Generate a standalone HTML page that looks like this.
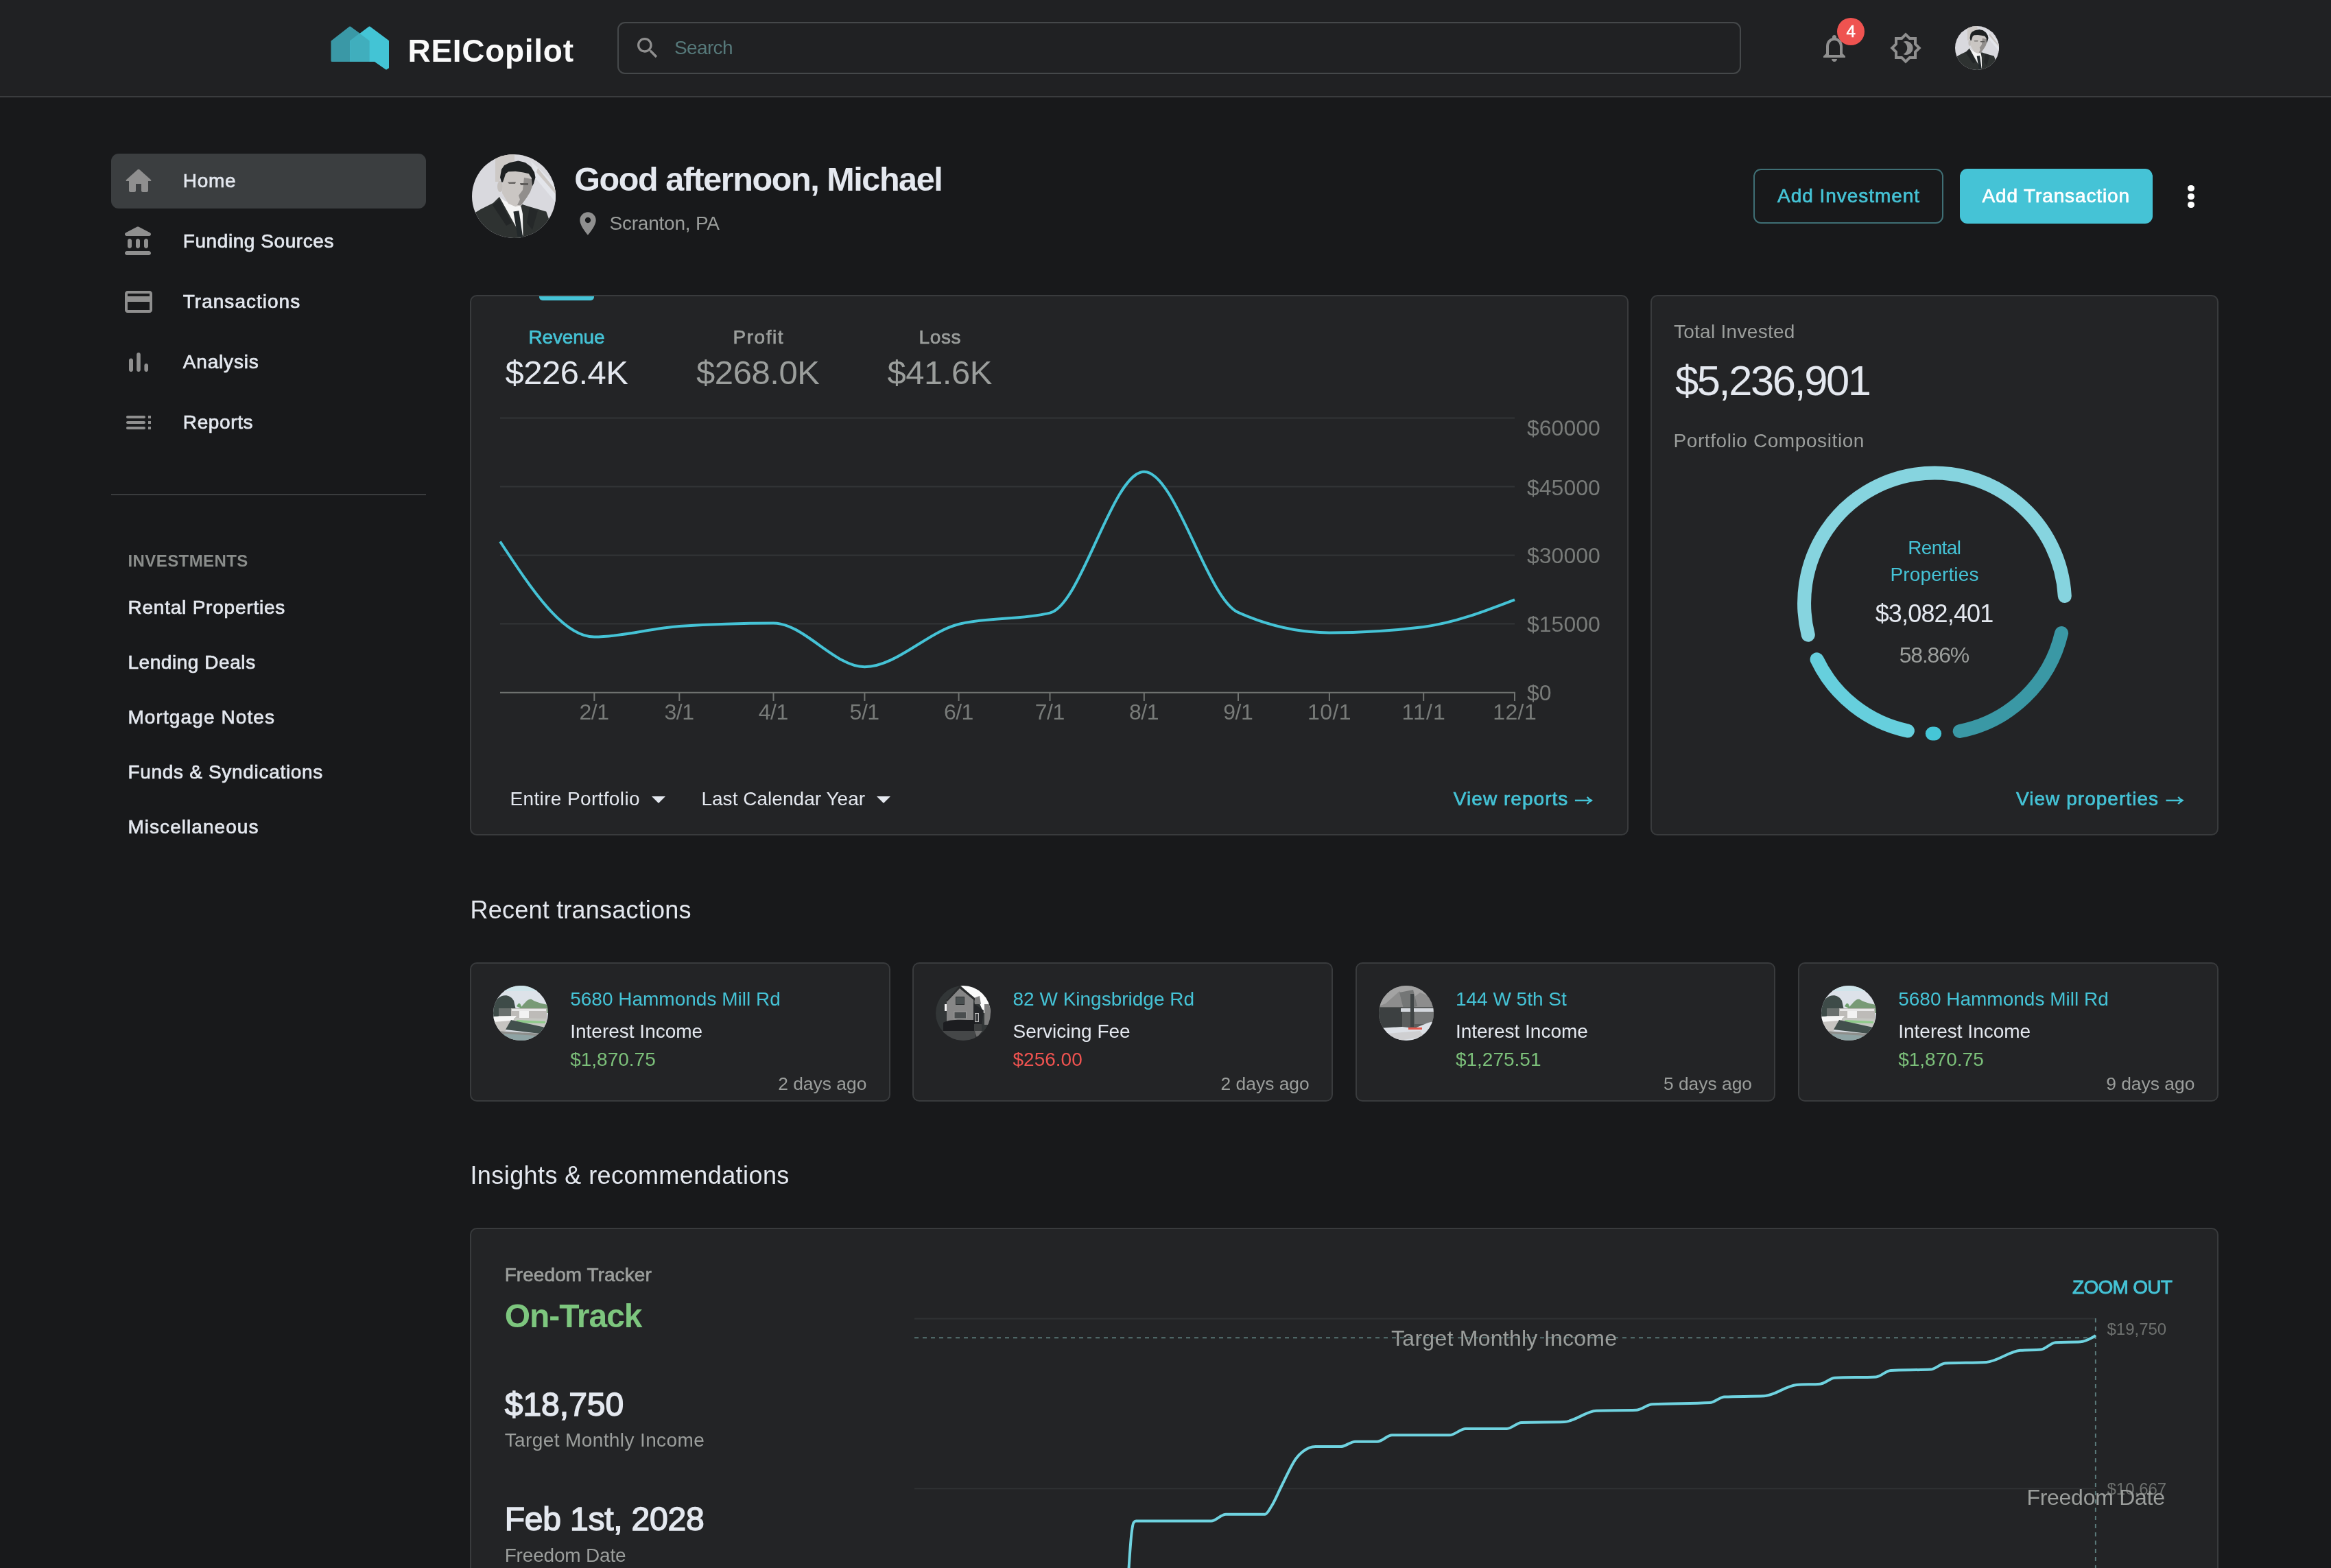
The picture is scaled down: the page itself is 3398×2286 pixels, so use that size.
<!DOCTYPE html>
<html><head><meta charset="utf-8"><title>REICopilot</title>
<style>
html,body{margin:0;padding:0;}
body{width:3398px;height:2286px;overflow:hidden;background:#18191b;font-family:"Liberation Sans",sans-serif;position:relative;}
.t{position:absolute;white-space:nowrap;line-height:1;}
.abs{position:absolute;}
.card{position:absolute;box-sizing:border-box;background:#232426;border:2px solid #393b3d;border-radius:10px;}
svg{position:absolute;overflow:visible;}
</style></head><body>
<div id="root" style="position:absolute;left:0;top:0;width:3398px;height:2286px;will-change:transform;">
<svg width="0" height="0" style="position:absolute">
<defs>
<symbol id="man" viewBox="0 0 122 122">
<clipPath id="mc"><circle cx="61" cy="61" r="61"/></clipPath>
<g clip-path="url(#mc)">
<rect width="122" height="122" fill="#d9d9de"/>
<path d="M34,0 L62,0 L62,14 L44,20 L40,40 L34,40 Z" fill="#cdc9c6"/>
<path d="M86,10 L122,44 L122,70 L92,34 Z" fill="#e3e5ea"/>
<path d="M96,20 L122,52 L122,58 L94,26 Z" fill="#cbc7c4"/>
<path d="M3,86 L12.400,80.300 L30.800,71.100 L40,62 L62,84 L73.600,73 L83.800,76.200 L108.300,83.400 L112,94 L122,122 L0,122 Z" fill="#2e3231"/>
<path d="M30,74 L40,66 L58,100 L50,104 Z" fill="#232627"/>
<path d="M84,78 L96,82 L88,110 L80,100 Z" fill="#252829"/>
<path d="M40,62 L48,68 L71.600,76 L74,87 L74.500,119 L66.500,110 Z" fill="#f5f5f5"/>
<path d="M60.400,83.400 L68.500,82.300 L74,120 L66.500,120 Z" fill="#23292b"/>
<ellipse cx="41" cy="47" rx="4" ry="8" fill="#c4c0bd"/>
<path d="M45,30 L52,24 L74,24 L84,28 L88,40 L87.900,46.600 L84.900,54.800 L79.800,63 L71.600,74.200 L63.400,76.200 L53.200,72.100 L44,56.800 Z" fill="#cac6c3"/>
<path d="M76,34 L87,36 L87.900,46.600 L84.900,54.800 L79.800,63 L71.600,74.200 L66,74 L70,66 L68,60 L74,52 Z" fill="#918e8c"/>
<path d="M52,40.500 L64,40 L63,43 L54,43 Z" fill="#6f6c6a"/>
<path d="M70,42 L82,42 L82,45 L71,45 Z" fill="#5f5d5b"/>
<path d="M43,40.500 L41,33.400 L43,22.100 L47.100,16 L55.300,11.900 L67.500,9.400 L77.700,11.900 L85.900,18 L91,26.200 L92.500,33.400 L90,42.500 L87.900,46.600 L86.900,34.400 L82.800,28.300 L73.600,26.200 L63.400,24.700 L53.200,25.200 L49.100,28.300 L47.100,34.400 L45,40.500 Z" fill="#1e2122"/>
</g>
</symbol>
<symbol id="h1" viewBox="0 0 80 80">
<clipPath id="c1"><circle cx="40" cy="40" r="40"/></clipPath>
<g clip-path="url(#c1)">
<rect width="80" height="80" fill="#dde2e9"/>
<rect width="80" height="8" fill="#cfe5eb"/>
<path d="M0,30 C4,14 22,8 30,22 L34,40 L0,46 Z" fill="#3e4b48"/>
<path d="M38,34 C46,26 50,18 56,20 C62,24 70,26 80,28 L80,40 L38,40 Z" fill="#789a76"/>
<path d="M34,30 C38,22 40,26 42,34 Z" fill="#6fa06e"/>
<rect x="8" y="33" width="70" height="18" fill="#bdbbb8"/>
<rect x="27" y="34" width="50" height="3" fill="#e8e8e8"/>
<rect x="38" y="37" width="14" height="10" fill="#f2f2f2"/>
<rect x="8" y="33" width="18" height="11" fill="#6a706e"/>
<path d="M0,45 L34,44 L28,52 L0,54 Z" fill="#f6f6f6"/>
<path d="M0,53 L26,51 L18,66 L4,68 Z" fill="#c6c4c1"/>
<path d="M30,47 L78,48 L78,62 L34,56 Z" fill="#c5c7c2"/>
<path d="M34,50 L76,52 L76,55 L34,54 Z" fill="#8fca8a"/>
<path d="M26,50 L76,61 L68,70 L18,64 Z" fill="#42504d"/>
<path d="M6,66 L70,70 L60,80 L14,80 Z" fill="#8e8f8c"/>
<path d="M14,70 L64,73 L58,80 L20,80 Z" fill="#8ea3a4"/>
</g>
</symbol>
<symbol id="h2" viewBox="0 0 80 80">
<clipPath id="c2"><circle cx="40" cy="40" r="40"/></clipPath>
<g clip-path="url(#c2)">
<rect width="80" height="80" fill="#323637"/>
<path d="M36,0 L80,0 L80,40 L70,40 L64,26 L55,17 Z" fill="#fbfbfb"/>
<path d="M56,18 L64,15 L66,27 L57,27 Z" fill="#7f7f7f"/>
<rect x="71" y="27" width="9" height="30" fill="#7e7e7e"/>
<path d="M16,52 L16,20 L35,2 L55,18 L55,52 Z" fill="#868686"/>
<path d="M15,21 L35,0 L57,18 L57,22 L35,4 L17,23 Z" fill="#2a2c2d"/>
<rect x="13" y="27" width="3" height="10" fill="#f4f4f4"/>
<rect x="29.500" y="16.500" width="12" height="11" fill="#4a5051" stroke="#2d3031" stroke-width="1"/>
<rect x="27" y="38" width="17.500" height="10" fill="#4a4e4f" stroke="#9a9a9a" stroke-width="1"/>
<path d="M55,26 L70,36 L67,60 L55,60 Z" fill="#25272a"/>
<rect x="57.500" y="40.500" width="5" height="12" fill="#3a3c3e" stroke="#bdbdbd" stroke-width="1"/>
<path d="M11,54 C20,48 40,50 57,50 L57,66 L11,66 Z" fill="#1c1d20"/>
<rect x="56" y="56" width="11" height="10" fill="#3c3e3f"/>
<path d="M8,66 L58,66 L58,80 L16,80 Z" fill="#454748"/>
<path d="M57,66 L68,66 L60,76 Z" fill="#6f6f6f"/>
</g>
</symbol>
<symbol id="h3" viewBox="0 0 80 80">
<clipPath id="c3"><circle cx="40" cy="40" r="40"/></clipPath>
<g clip-path="url(#c3)">
<rect width="80" height="80" fill="#8d8d8d"/>
<path d="M0,0 L80,0 L80,18 L60,10 L44,22 L30,8 L10,26 L0,30Z" fill="#a3a3a3"/>
<path d="M30,10 L50,6 L56,30 L36,34 Z" fill="#747676"/>
<rect x="0" y="31" width="80" height="30" fill="#5a5d5d"/>
<rect x="0" y="32" width="34" height="30" fill="#3c4041"/>
<rect x="32" y="33" width="48" height="5" fill="#d4d8de"/>
<rect x="52" y="38" width="28" height="18" fill="#777979"/>
<rect x="46" y="12" width="5" height="48" fill="#3f4445"/>
<path d="M0,62 L34,60 L52,62 L72,54 L80,52 L80,80 L0,80 Z" fill="#dde1e7"/>
<path d="M10,70 L60,66 L66,74 L30,80 L14,80 Z" fill="#cfcfd1"/>
<rect x="43" y="61" width="20" height="3" fill="#e2574c"/>
</g>
</symbol>
</defs></svg>
<div class="abs" style="left:0;top:0;width:3398px;height:140px;background:#202123;border-bottom:2px solid #3a3c3e;"></div>
<svg style="left:480px;top:36px" width="90" height="70" viewBox="480 36 90 70">
<path d="M484,60.500 L510.200,40 L537.500,60 L537.500,88.500 L484,88.500 Z" fill="#3a98a6" stroke="#3a98a6" stroke-width="3" stroke-linejoin="round"/>
<path d="M538.600,40 L511.500,60.500 L511.500,88.500 L546.500,88.500 L563,100 L565.500,98.500 L565.500,60 Z" fill="#43c4d5" stroke="#43c4d5" stroke-width="3" stroke-linejoin="round"/>
<path d="M510.200,59.500 L524.400,48.800 L538.600,59.500 L538.600,90 L510.200,90 Z" fill="#40aebd"/>
</svg>
<div class="t" style="left:594.5px;top:51.1px;font-size:46px;color:#fafafa;letter-spacing:0.71px;font-weight:700;">REICopilot</div>
<div class="abs" style="left:900px;top:32px;width:1638px;height:76px;box-sizing:border-box;border:2px solid #45484a;border-radius:11px;"></div>
<svg style="left:924px;top:50px" width="40" height="40" viewBox="0 0 24 24"><path fill="#8f8f8f" d="M15.5 14h-.79l-.28-.27C15.41 12.59 16 11.11 16 9.5 16 5.91 13.09 3 9.5 3S3 5.91 3 9.5 5.91 16 9.5 16c1.61 0 3.09-.59 4.230-1.570l.27.28v.79l5 4.990L20.490 19l-4.990-5zm-6 0C7.010 14 5 11.990 5 9.500S7.010 5 9.500 5 14 7.010 14 9.500 11.990 14 9.500 14z"/></svg>
<div class="t" style="left:983.0px;top:56.1px;font-size:28px;color:#56797a;letter-spacing:-0.64px;">Search</div>
<svg style="left:2650px;top:46px" width="48" height="48" viewBox="0 0 24 24"><path fill="#8f8f8f" d="M12 22c1.1 0 2-.9 2-2h-4c0 1.1.9 2 2 2zm6-6v-5c0-3.070-1.630-5.640-4.500-6.320V4c0-.83-.67-1.500-1.500-1.500s-1.500.67-1.500 1.500v.68C7.640 5.360 6 7.920 6 11v5l-2 2v1h16v-1l-2-2zm-2 1H8v-6c0-2.480 1.510-4.500 4-4.500s4 2.020 4 4.500v6z"/></svg>
<div class="abs" style="left:2678px;top:26px;width:40px;height:40px;border-radius:50%;background:#ef5350;"></div>
<div class="t" style="left:2691.5px;top:33.7px;font-size:24px;color:#ffffff;-webkit-text-stroke:0.58px #ffffff;">4</div>
<svg style="left:2754px;top:46px" width="48" height="48" viewBox="0 0 24 24"><path fill="#8f8f8f" d="M20 8.690V4h-4.690L12 .69 8.690 4H4v4.690L.69 12 4 15.310V20h4.690L12 23.310 15.310 20H20v-4.690L23.310 12 20 8.690zm-2 5.790V18h-3.520L12 20.480 9.520 18H6v-3.520L3.520 12 6 9.520V6h3.520L12 3.520 14.480 6H18v3.520L20.480 12 18 14.480zM12.290 7c-.74 0-1.450.17-2.080.46 1.720.79 2.920 2.530 2.920 4.540s-1.200 3.750-2.920 4.540c.63.29 1.340.46 2.080.46 2.760 0 5-2.240 5-5s-2.240-5-5-5z"/></svg>
<svg style="left:2849.600px;top:37.800px" width="64" height="64"><use href="#man" width="64" height="64"/></svg>
<div class="abs" style="left:162px;top:224px;width:459px;height:80px;border-radius:11px;background:#3b3e40;"></div>
<svg style="left:178px;top:240px" width="48" height="48" viewBox="0 0 24 24"><path fill="#8f8f8f" d="M10 19v-5h4v5c0 .55.45 1 1 1h3c.55 0 1-.45 1-1v-7h1.700c.46 0 .68-.57.33-.87L12.670 3.600c-.38-.34-.96-.34-1.340 0l-8.360 7.530c-.34.3-.13.87.33.87H5v7c0 .55.45 1 1 1h3c.55 0 1-.45 1-1z"/></svg>
<div class="t" style="left:266.8px;top:249.8px;font-size:28px;color:#e4e8ef;letter-spacing:0.70px;-webkit-text-stroke:0.67px #e4e8ef;">Home</div>
<svg style="left:178px;top:328px" width="48" height="48" viewBox="0 0 24 24"><path fill="#8f8f8f" d="M4 11.500v4c0 .83.67 1.500 1.500 1.500S7 16.330 7 15.500v-4c0-.83-.67-1.500-1.500-1.500S4 10.670 4 11.500zm6 0v4c0 .83.67 1.500 1.500 1.500s1.500-.67 1.500-1.500v-4c0-.83-.67-1.500-1.500-1.500s-1.500.67-1.500 1.500zM3.500 22h16c.83 0 1.500-.67 1.500-1.500s-.67-1.500-1.500-1.500h-16c-.83 0-1.500.67-1.500 1.500S2.670 22 3.500 22zM16 11.500v4c0 .83.67 1.500 1.500 1.500s1.500-.67 1.500-1.500v-4c0-.83-.67-1.500-1.500-1.500s-1.500.67-1.500 1.500zM10.570 1.490l-7.900 4.160c-.41.21-.67.64-.67 1.100C2 7.440 2.560 8 3.250 8h16.510C20.440 8 21 7.440 21 6.750c0-.46-.26-.89-.67-1.100l-7.900-4.160c-.58-.31-1.280-.31-1.860 0z"/></svg>
<div class="t" style="left:266.8px;top:337.8px;font-size:28px;color:#e4e8ef;letter-spacing:0.57px;-webkit-text-stroke:0.67px #e4e8ef;">Funding Sources</div>
<svg style="left:178px;top:416px" width="48" height="48" viewBox="0 0 24 24"><path fill="#8f8f8f" d="M20 4H4c-1.110 0-1.990.89-1.990 2L2 18c0 1.110.89 2 2 2h16c1.110 0 2-.89 2-2V6c0-1.110-.89-2-2-2zm0 14H4v-6h16v6zm0-10H4V6h16v2z"/></svg>
<div class="t" style="left:266.8px;top:425.8px;font-size:28px;color:#e4e8ef;letter-spacing:1.01px;-webkit-text-stroke:0.67px #e4e8ef;">Transactions</div>
<svg style="left:178px;top:504px" width="48" height="48" viewBox="0 0 24 24"><path fill="#8f8f8f" d="M6.400 9.200h.2c.77 0 1.400.63 1.400 1.400v7c0 .77-.63 1.400-1.400 1.400h-.2c-.77 0-1.400-.63-1.400-1.400v-7c0-.77.63-1.400 1.400-1.400zM12 5c.77 0 1.400.63 1.400 1.400v11.200c0 .77-.63 1.400-1.400 1.400-.77 0-1.400-.63-1.400-1.400V6.400c0-.77.63-1.400 1.400-1.400zm5.600 8c.77 0 1.400.63 1.400 1.400v3.200c0 .77-.63 1.400-1.400 1.400-.77 0-1.400-.63-1.400-1.400v-3.200c0-.77.63-1.400 1.400-1.400z"/></svg>
<div class="t" style="left:266.8px;top:513.8px;font-size:28px;color:#e4e8ef;letter-spacing:0.82px;-webkit-text-stroke:0.67px #e4e8ef;">Analysis</div>
<svg style="left:178px;top:592px" width="48" height="48" viewBox="0 0 24 24"><path fill="#8f8f8f" d="M4 9h12c.55 0 1-.45 1-1s-.45-1-1-1H4c-.55 0-1 .45-1 1s.45 1 1 1zm0 4h12c.55 0 1-.45 1-1s-.45-1-1-1H4c-.55 0-1 .45-1 1s.45 1 1 1zm0 4h12c.55 0 1-.45 1-1s-.45-1-1-1H4c-.55 0-1 .45-1 1s.45 1 1 1zm15 0h2v-2h-2v2zm0-10v2h2V7h-2zm0 6h2v-2h-2v2z"/></svg>
<div class="t" style="left:266.8px;top:601.8px;font-size:28px;color:#e4e8ef;letter-spacing:0.63px;-webkit-text-stroke:0.67px #e4e8ef;">Reports</div>
<div class="abs" style="left:162px;top:720px;width:459px;height:2px;background:#3a3c3e;"></div>
<div class="t" style="left:186.4px;top:805.7px;font-size:24px;color:#8a8d8b;letter-spacing:0.43px;font-weight:700;">INVESTMENTS</div>
<div class="t" style="left:186.4px;top:871.6px;font-size:28px;color:#e4e8ef;letter-spacing:0.79px;-webkit-text-stroke:0.67px #e4e8ef;">Rental Properties</div>
<div class="t" style="left:186.4px;top:951.6px;font-size:28px;color:#e4e8ef;letter-spacing:0.56px;-webkit-text-stroke:0.67px #e4e8ef;">Lending Deals</div>
<div class="t" style="left:186.4px;top:1031.6px;font-size:28px;color:#e4e8ef;letter-spacing:1.11px;-webkit-text-stroke:0.67px #e4e8ef;">Mortgage Notes</div>
<div class="t" style="left:186.4px;top:1111.6px;font-size:28px;color:#e4e8ef;letter-spacing:0.69px;-webkit-text-stroke:0.67px #e4e8ef;">Funds &amp; Syndications</div>
<div class="t" style="left:186.4px;top:1191.6px;font-size:28px;color:#e4e8ef;letter-spacing:1.05px;-webkit-text-stroke:0.67px #e4e8ef;">Miscellaneous</div>
<svg style="left:688px;top:225px" width="122" height="122"><use href="#man" width="122" height="122"/></svg>
<div class="t" style="left:837.2px;top:236.6px;font-size:48.5px;color:#e4e8ef;letter-spacing:-1.41px;font-weight:700;">Good afternoon, Michael</div>
<svg style="left:836.700px;top:305.700px" width="40" height="40" viewBox="0 0 24 24"><path fill="#8f8f8f" d="M12 2C8.130 2 5 5.130 5 9c0 5.250 7 13 7 13s7-7.750 7-13c0-3.870-3.130-7-7-7zm0 9.500c-1.380 0-2.500-1.120-2.500-2.500s1.120-2.500 2.500-2.500 2.500 1.120 2.500 2.500-1.120 2.500-2.500 2.500z"/></svg>
<div class="t" style="left:888.5px;top:312.3px;font-size:28px;color:#9b9e9c;letter-spacing:-0.22px;">Scranton, PA</div>
<div class="abs" style="left:2556px;top:246px;width:277px;height:80px;box-sizing:border-box;border:2px solid #3f6f75;border-radius:11px;"></div>
<div class="t" style="left:2591.0px;top:272.0px;font-size:28px;color:#45c3d6;letter-spacing:0.96px;-webkit-text-stroke:0.67px #45c3d6;">Add Investment</div>
<div class="abs" style="left:2857px;top:246px;width:281px;height:80px;border-radius:11px;background:#45c3d6;"></div>
<div class="t" style="left:2889.5px;top:272.0px;font-size:28px;color:#ffffff;letter-spacing:0.87px;-webkit-text-stroke:0.67px #ffffff;">Add Transaction</div>
<div class="abs" style="left:3189.3px;top:269.8px;width:9.400px;height:9.400px;border-radius:50%;background:#ffffff;"></div>
<div class="abs" style="left:3189.3px;top:281.8px;width:9.400px;height:9.400px;border-radius:50%;background:#ffffff;"></div>
<div class="abs" style="left:3189.3px;top:293.8px;width:9.400px;height:9.400px;border-radius:50%;background:#ffffff;"></div>
<div class="card" style="left:685px;top:430px;width:1689px;height:788px;"></div>
<div class="abs" style="left:786px;top:432px;width:80px;height:6px;background:#45c3d6;border-radius:0 0 5px 5px;"></div>
<div class="t" style="left:770.5px;top:477.7px;font-size:28px;color:#45c3d6;letter-spacing:-0.18px;-webkit-text-stroke:0.67px #45c3d6;">Revenue</div>
<div class="t" style="left:736.6px;top:519.3px;font-size:49px;color:#e4e8ef;letter-spacing:-0.53px;">$226.4K</div>
<div class="t" style="left:1068.5px;top:477.7px;font-size:28px;color:#9b9e9c;letter-spacing:1.53px;-webkit-text-stroke:0.67px #9b9e9c;">Profit</div>
<div class="t" style="left:1015.0px;top:519.3px;font-size:49px;color:#9b9e9c;letter-spacing:-0.43px;">$268.0K</div>
<div class="t" style="left:1339.5px;top:477.7px;font-size:28px;color:#9b9e9c;letter-spacing:0.62px;-webkit-text-stroke:0.67px #9b9e9c;">Loss</div>
<div class="t" style="left:1293.6px;top:519.3px;font-size:49px;color:#9b9e9c;letter-spacing:-0.50px;">$41.6K</div>
<svg style="left:0;top:0" width="3398" height="1230" viewBox="0 0 3398 1230">
<line x1="729.0" x2="2208.0" y1="609.5" y2="609.5" stroke="#333537" stroke-width="2"/>
<line x1="729.0" x2="2208.0" y1="709.5" y2="709.5" stroke="#333537" stroke-width="2"/>
<line x1="729.0" x2="2208.0" y1="809.5" y2="809.5" stroke="#333537" stroke-width="2"/>
<line x1="729.0" x2="2208.0" y1="909.5" y2="909.5" stroke="#333537" stroke-width="2"/>
<line x1="729.0" x2="2209.0" y1="1009.8" y2="1009.8" stroke="#707371" stroke-width="2"/>
<line x1="866.3" x2="866.3" y1="1009" y2="1022" stroke="#707371" stroke-width="2"/>
<line x1="990.3" x2="990.3" y1="1009" y2="1022" stroke="#707371" stroke-width="2"/>
<line x1="1127.5" x2="1127.5" y1="1009" y2="1022" stroke="#707371" stroke-width="2"/>
<line x1="1260.4" x2="1260.4" y1="1009" y2="1022" stroke="#707371" stroke-width="2"/>
<line x1="1397.6" x2="1397.6" y1="1009" y2="1022" stroke="#707371" stroke-width="2"/>
<line x1="1530.5" x2="1530.5" y1="1009" y2="1022" stroke="#707371" stroke-width="2"/>
<line x1="1667.8" x2="1667.8" y1="1009" y2="1022" stroke="#707371" stroke-width="2"/>
<line x1="1805.0" x2="1805.0" y1="1009" y2="1022" stroke="#707371" stroke-width="2"/>
<line x1="1937.9" x2="1937.9" y1="1009" y2="1022" stroke="#707371" stroke-width="2"/>
<line x1="2075.2" x2="2075.2" y1="1009" y2="1022" stroke="#707371" stroke-width="2"/>
<line x1="2208.0" x2="2208.0" y1="1009" y2="1022" stroke="#707371" stroke-width="2"/>
<path d="M729.0,789.5C774.8,859.0 820.5,928.6 866.3,928.6C907.6,928.6 948.9,915.8 990.3,913.0C1036.0,909.9 1081.8,908.4 1127.5,908.4C1171.8,908.4 1216.1,972.2 1260.4,972.2C1306.1,972.2 1351.9,921.3 1397.6,910.0C1441.9,899.1 1486.2,904.5 1530.5,893.6C1576.3,882.3 1622.0,687.7 1667.8,687.7C1713.5,687.7 1759.3,872.6 1805.0,892.9C1849.3,912.6 1893.6,922.4 1937.9,922.4C1983.6,922.4 2029.4,919.6 2075.2,913.9C2119.4,908.4 2163.7,891.4 2208.0,874.4" fill="none" stroke="#45c3d6" stroke-width="4" stroke-linejoin="round"/>
</svg>
<div class="t" style="left:2226.0px;top:607.8px;font-size:32px;color:#787b79;">$60000</div>
<div class="t" style="left:2226.0px;top:695.3px;font-size:32px;color:#787b79;">$45000</div>
<div class="t" style="left:2226.0px;top:794.1px;font-size:32px;color:#787b79;">$30000</div>
<div class="t" style="left:2226.0px;top:893.8px;font-size:32px;color:#787b79;">$15000</div>
<div class="t" style="left:2226.0px;top:993.8px;font-size:32px;color:#787b79;">$0</div>
<div class="t" style="left:844.5px;top:1022.2px;font-size:32px;color:#787b79;letter-spacing:-0.49px;">2/1</div>
<div class="t" style="left:968.5px;top:1022.2px;font-size:32px;color:#787b79;letter-spacing:-0.49px;">3/1</div>
<div class="t" style="left:1105.8px;top:1022.2px;font-size:32px;color:#787b79;letter-spacing:-0.49px;">4/1</div>
<div class="t" style="left:1238.6px;top:1022.2px;font-size:32px;color:#787b79;letter-spacing:-0.49px;">5/1</div>
<div class="t" style="left:1375.9px;top:1022.2px;font-size:32px;color:#787b79;letter-spacing:-0.49px;">6/1</div>
<div class="t" style="left:1508.7px;top:1022.2px;font-size:32px;color:#787b79;letter-spacing:-0.49px;">7/1</div>
<div class="t" style="left:1646.0px;top:1022.2px;font-size:32px;color:#787b79;letter-spacing:-0.49px;">8/1</div>
<div class="t" style="left:1783.3px;top:1022.2px;font-size:32px;color:#787b79;letter-spacing:-0.49px;">9/1</div>
<div class="t" style="left:1906.1px;top:1022.2px;font-size:32px;color:#787b79;letter-spacing:0.41px;">10/1</div>
<div class="t" style="left:2043.4px;top:1022.2px;font-size:32px;color:#787b79;letter-spacing:1.20px;">11/1</div>
<div class="t" style="left:2176.2px;top:1022.2px;font-size:32px;color:#787b79;letter-spacing:0.41px;">12/1</div>
<div class="t" style="left:743.5px;top:1151.1px;font-size:28px;color:#e4e8ef;letter-spacing:0.36px;">Entire Portfolio</div>
<svg style="left:950.400px;top:1161px" width="20" height="10"><path d="M0,0L20,0L10,10Z" fill="#e4e8ef"/></svg>
<div class="t" style="left:1022.4px;top:1151.1px;font-size:28px;color:#e4e8ef;letter-spacing:0.03px;">Last Calendar Year</div>
<svg style="left:1277.500px;top:1161px" width="20" height="10"><path d="M0,0L20,0L10,10Z" fill="#e4e8ef"/></svg>
<div class="t" style="left:2118.8px;top:1151.1px;font-size:28px;color:#45c3d6;letter-spacing:1.04px;-webkit-text-stroke:0.67px #45c3d6;">View reports</div>
<svg style="left:0;top:0" width="3398" height="1230" viewBox="0 0 3398 1230"><path d="M2295.9,1167H2319.4M2313.7000000000003,1161.8Q2315.9,1165.4 2320.4,1167Q2315.9,1168.6 2313.7000000000003,1172.2" fill="none" stroke="#45c3d6" stroke-width="2.300" stroke-linejoin="round"/></svg>
<div class="card" style="left:2406px;top:430px;width:828px;height:788px;"></div>
<div class="t" style="left:2439.9px;top:469.6px;font-size:28px;color:#9b9e9c;letter-spacing:0.29px;">Total Invested</div>
<div class="t" style="left:2442.0px;top:524.4px;font-size:61.5px;color:#e4e8ef;letter-spacing:-2.42px;">$5,236,901</div>
<div class="t" style="left:2439.5px;top:629.3px;font-size:28px;color:#9b9e9c;letter-spacing:0.59px;">Portfolio Composition</div>
<svg style="left:0;top:0" width="3398" height="1230" viewBox="0 0 3398 1230">
<path d="M2635.8,925.7A190,190 0 1 1 3009.8,869.0" fill="none" stroke="#86d4df" stroke-width="20" stroke-linecap="round"/>
<path d="M3005.1,923.0A190,190 0 0 1 2856.7,1066.0" fill="none" stroke="#3a98a5" stroke-width="20" stroke-linecap="round"/>
<path d="M2820.1,1069.6A190,190 0 0 1 2816.8,1069.6" fill="none" stroke="#45c6d7" stroke-width="20" stroke-linecap="round"/>
<path d="M2780.9,1065.5A190,190 0 0 1 2648.6,961.4" fill="none" stroke="#66cfdd" stroke-width="20" stroke-linecap="round"/>
</svg>
<div class="t" style="left:2781.2px;top:784.5px;font-size:28px;color:#45c3d6;letter-spacing:-0.65px;">Rental</div>
<div class="t" style="left:2755.5px;top:824.3px;font-size:28px;color:#45c3d6;letter-spacing:0.15px;">Properties</div>
<div class="t" style="left:2733.7px;top:877.0px;font-size:36px;color:#e4e8ef;letter-spacing:-0.84px;">$3,082,401</div>
<div class="t" style="left:2768.8px;top:939.3px;font-size:32px;color:#9b9e9c;letter-spacing:-1.23px;">58.86%</div>
<div class="t" style="left:2939.0px;top:1151.1px;font-size:28px;color:#45c3d6;letter-spacing:1.04px;-webkit-text-stroke:0.67px #45c3d6;">View properties</div>
<svg style="left:0;top:0" width="3398" height="1230" viewBox="0 0 3398 1230"><path d="M3157.5,1167H3181M3175.3,1161.8Q3177.5,1165.4 3182,1167Q3177.5,1168.6 3175.3,1172.2" fill="none" stroke="#45c3d6" stroke-width="2.300" stroke-linejoin="round"/></svg>
<div class="t" style="left:685.6px;top:1309.2px;font-size:36px;color:#e4e8ef;letter-spacing:0.21px;">Recent transactions</div>
<div class="card" style="left:685.0px;top:1403px;width:612.700px;height:203px;"></div>
<svg style="left:719.0px;top:1436.800px" width="80" height="80"><use href="#h1" width="80" height="80"/></svg>
<div class="t" style="left:831.2px;top:1443.3px;font-size:28px;color:#45c3d6;">5680 Hammonds Mill Rd</div>
<div class="t" style="left:831.2px;top:1490.1px;font-size:28px;color:#e4e8ef;">Interest Income</div>
<div class="t" style="left:831.2px;top:1530.7px;font-size:28px;color:#7cc07a;">$1,870.75</div>
<div class="t" style="left:1134.2px;top:1567.3px;font-size:26.4px;color:#9b9e9c;">2 days ago</div>
<div class="card" style="left:1330.3px;top:1403px;width:612.700px;height:203px;"></div>
<svg style="left:1364.3px;top:1436.800px" width="80" height="80"><use href="#h2" width="80" height="80"/></svg>
<div class="t" style="left:1476.5px;top:1443.3px;font-size:28px;color:#45c3d6;">82 W Kingsbridge Rd</div>
<div class="t" style="left:1476.5px;top:1490.1px;font-size:28px;color:#e4e8ef;">Servicing Fee</div>
<div class="t" style="left:1476.5px;top:1530.7px;font-size:28px;color:#ef5350;">$256.00</div>
<div class="t" style="left:1779.6px;top:1567.3px;font-size:26.4px;color:#9b9e9c;">2 days ago</div>
<div class="card" style="left:1975.7px;top:1403px;width:612.700px;height:203px;"></div>
<svg style="left:2009.7px;top:1436.800px" width="80" height="80"><use href="#h3" width="80" height="80"/></svg>
<div class="t" style="left:2121.9px;top:1443.3px;font-size:28px;color:#45c3d6;">144 W 5th St</div>
<div class="t" style="left:2121.9px;top:1490.1px;font-size:28px;color:#e4e8ef;">Interest Income</div>
<div class="t" style="left:2121.9px;top:1530.7px;font-size:28px;color:#7cc07a;">$1,275.51</div>
<div class="t" style="left:2424.9px;top:1567.3px;font-size:26.4px;color:#9b9e9c;">5 days ago</div>
<div class="card" style="left:2621.0px;top:1403px;width:612.700px;height:203px;"></div>
<svg style="left:2655.0px;top:1436.800px" width="80" height="80"><use href="#h1" width="80" height="80"/></svg>
<div class="t" style="left:2767.2px;top:1443.3px;font-size:28px;color:#45c3d6;">5680 Hammonds Mill Rd</div>
<div class="t" style="left:2767.2px;top:1490.1px;font-size:28px;color:#e4e8ef;">Interest Income</div>
<div class="t" style="left:2767.2px;top:1530.7px;font-size:28px;color:#7cc07a;">$1,870.75</div>
<div class="t" style="left:3070.2px;top:1567.3px;font-size:26.4px;color:#9b9e9c;">9 days ago</div>
<div class="t" style="left:685.4px;top:1695.8px;font-size:36px;color:#e4e8ef;letter-spacing:0.43px;">Insights &amp; recommendations</div>
<div class="card" style="left:685px;top:1790px;width:2549px;height:560px;"></div>
<div class="t" style="left:735.7px;top:1845.3px;font-size:28px;color:#9b9e9c;letter-spacing:0.06px;-webkit-text-stroke:0.67px #9b9e9c;">Freedom Tracker</div>
<div class="t" style="left:735.7px;top:1895.4px;font-size:48px;color:#7dc67e;letter-spacing:-1.04px;font-weight:700;">On-Track</div>
<div class="t" style="left:735.7px;top:2023.6px;font-size:48px;color:#e4e8ef;letter-spacing:0.01px;-webkit-text-stroke:1.15px #e4e8ef;-webkit-text-stroke-width:1.5px;">$18,750</div>
<div class="t" style="left:735.7px;top:2085.9px;font-size:28px;color:#9b9e9c;letter-spacing:0.39px;">Target Monthly Income</div>
<div class="t" style="left:735.7px;top:2191.4px;font-size:48px;color:#e4e8ef;letter-spacing:-0.21px;-webkit-text-stroke:1.15px #e4e8ef;-webkit-text-stroke-width:1.5px;">Feb 1st, 2028</div>
<div class="t" style="left:735.7px;top:2254.3px;font-size:28px;color:#9b9e9c;letter-spacing:-0.18px;">Freedom Date</div>
<div class="t" style="left:3021.0px;top:1863.1px;font-size:28px;color:#45c3d6;letter-spacing:-0.70px;-webkit-text-stroke:0.67px #45c3d6;-webkit-text-stroke-width:0.9px;">ZOOM OUT</div>
<svg style="left:0;top:1800px" width="3398" height="486" viewBox="0 1800 3398 486">
<line x1="1333" x2="3055" y1="1922.5" y2="1922.5" stroke="#303234" stroke-width="2"/>
<line x1="1333" x2="3055" y1="2170.2" y2="2170.2" stroke="#303234" stroke-width="2"/>
<line x1="1333" x2="3055" y1="1950.300" y2="1950.300" stroke="#5e7f7e" stroke-width="1.800" stroke-dasharray="6 6"/>
<line x1="3054.800" x2="3054.800" y1="1922" y2="2290" stroke="#5e7f7e" stroke-width="1.800" stroke-dasharray="6 6"/>
<path d="M1645.3,2290.0C1646.7,2268.2 1648.2,2246.5 1649.6,2234.7C1650.6,2226.5 1651.6,2220.9 1652.6,2219.7C1653.7,2218.3 1654.9,2217.6 1656.0,2217.6C1692.5,2217.6 1729.0,2217.6 1765.5,2217.6C1772.7,2217.6 1779.8,2207.7 1787.0,2207.7C1806.0,2207.7 1825.0,2207.7 1844.0,2207.7C1847.1,2207.7 1850.3,2200.8 1853.4,2196.0C1858.4,2188.3 1863.4,2175.8 1868.4,2166.0C1875.6,2152.0 1882.8,2134.4 1890.0,2125.4C1892.8,2121.8 1895.7,2119.1 1898.5,2116.8C1904.9,2111.6 1911.4,2109.0 1917.8,2109.0C1929.9,2109.0 1942.1,2109.0 1954.2,2109.0C1961.4,2109.0 1968.5,2101.7 1975.7,2101.7C1986.4,2101.7 1997.1,2101.7 2007.8,2101.7C2015.0,2101.7 2022.1,2092.3 2029.3,2092.3C2057.2,2092.3 2085.1,2092.3 2113.0,2092.3C2120.8,2092.3 2128.7,2082.9 2136.5,2082.9C2156.5,2082.9 2176.6,2082.9 2196.6,2082.9C2203.7,2082.9 2210.9,2074.1 2218.0,2073.9C2238.7,2073.3 2259.5,2073.6 2280.2,2073.0C2295.9,2072.5 2311.5,2057.2 2327.2,2056.7C2346.5,2056.1 2365.8,2056.4 2385.1,2055.8C2393.0,2055.6 2400.8,2047.7 2408.7,2047.3C2436.6,2045.8 2464.5,2046.6 2492.4,2045.1C2499.5,2044.7 2506.7,2036.8 2513.8,2036.5C2533.1,2035.7 2552.4,2036.1 2571.7,2035.3C2587.5,2034.6 2603.2,2020.2 2619.0,2019.0C2630.4,2018.1 2641.9,2018.6 2653.3,2017.7C2660.4,2017.2 2667.6,2009.0 2674.7,2008.7C2694.7,2007.8 2714.8,2008.3 2734.8,2007.4C2741.9,2007.1 2749.1,1998.2 2756.2,1997.9C2775.5,1997.0 2794.8,1997.5 2814.1,1996.6C2821.3,1996.3 2828.4,1988.0 2835.6,1987.6C2855.6,1986.5 2875.6,1987.0 2895.6,1985.9C2912.1,1985.0 2928.5,1970.2 2945.0,1968.8C2955.0,1967.9 2965.0,1968.4 2975.0,1967.5C2982.2,1966.9 2989.3,1957.6 2996.5,1957.2C3008.6,1956.6 3020.8,1956.9 3032.9,1956.3C3040.2,1955.9 3047.5,1951.6 3054.8,1947.3" fill="none" stroke="#6fd3e0" stroke-width="4" stroke-linejoin="round"/>
</svg>
<div class="t" style="left:2028.1px;top:1935.2px;font-size:32px;color:#9b9e9c;letter-spacing:0.26px;">Target Monthly Income</div>
<div class="t" style="left:3071.5px;top:1926.2px;font-size:24px;color:#6e716f;letter-spacing:-0.01px;">$19,750</div>
<div class="t" style="left:3071.5px;top:2158.7px;font-size:24px;color:#6e716f;letter-spacing:-0.01px;">$10,667</div>
<div class="t" style="left:2954.4px;top:2166.9px;font-size:32px;color:#9b9e9c;letter-spacing:-0.27px;">Freedom Date</div>
</div>
</body></html>
